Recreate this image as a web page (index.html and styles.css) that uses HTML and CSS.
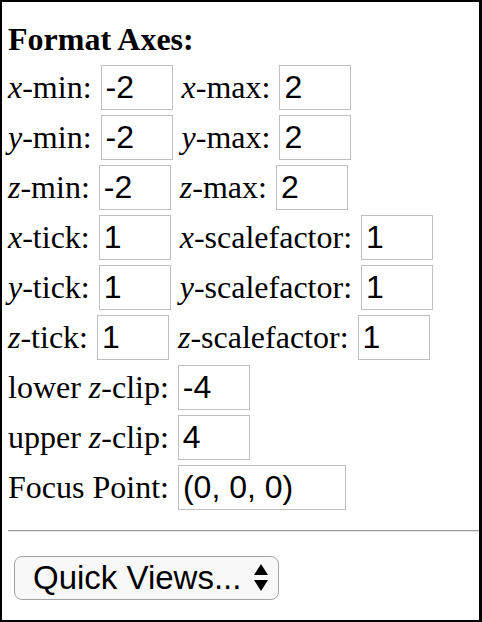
FILE: index.html
```html
<!DOCTYPE html>
<html>
<head>
<meta charset="utf-8">
<link rel="stylesheet" href="styles.css">
</head>
<body>
<div class="frame">
  <div class="title">Format Axes:</div>
  <div class="row"><label class="lbl"><i>x</i>-min:</label><input class="box" value="-2"><label class="lbl"><i>x</i>-max:</label><input class="box" value="2"></div>
  <div class="row"><label class="lbl"><i>y</i>-min:</label><input class="box" value="-2"><label class="lbl"><i>y</i>-max:</label><input class="box" value="2"></div>
  <div class="row"><label class="lbl"><i>z</i>-min:</label><input class="box" value="-2"><label class="lbl"><i>z</i>-max:</label><input class="box" value="2"></div>
  <div class="row"><label class="lbl"><i>x</i>-tick:</label><input class="box" value="1"><label class="lbl"><i>x</i>-scalefactor:</label><input class="box" value="1"></div>
  <div class="row"><label class="lbl"><i>y</i>-tick:</label><input class="box" value="1"><label class="lbl"><i>y</i>-scalefactor:</label><input class="box" value="1"></div>
  <div class="row"><label class="lbl"><i>z</i>-tick:</label><input class="box" value="1"><label class="lbl"><i>z</i>-scalefactor:</label><input class="box" value="1"></div>
  <div class="row"><label class="lbl">lower <i>z</i>-clip:</label><input class="box" value="-4"></div>
  <div class="row"><label class="lbl">upper <i>z</i>-clip:</label><input class="box" value="4"></div>
  <div class="row"><label class="lbl">Focus Point:</label><input class="box wide" value="(0, 0, 0)"></div>
  <hr class="rule">
  <div class="select">
    <span class="select-text">Quick Views...</span>
    <svg class="arrows" width="14" height="28" viewBox="0 0 14 28"><polygon points="7,0 14,11 0,11" fill="#000"/><polygon points="0,16 14,16 7,27" fill="#000"/></svg>
  </div>
</div>
</body>
</html>
```
FILE: styles.css
```css
html, body {
  margin: 0;
  padding: 0;
  background: #fff;
}
.frame {
  box-sizing: border-box;
  width: 482px;
  height: 622px;
  border: 2px solid #000;
  border-right-width: 3px;
  padding: 21px 0 0 6px;
  overflow: hidden;
  font-family: "Liberation Serif", "Times New Roman", serif;
  font-size: 32px;
  color: #000;
}
.title {
  font-weight: bold;
  line-height: 32px;
  margin-bottom: 10px;
}
.row {
  display: flex;
  align-items: baseline;
  margin-bottom: 5px;
}
.lbl {
  line-height: 32px;
  margin-right: 9px;
  white-space: nowrap;
}
.box {
  box-sizing: border-box;
  width: 72px;
  height: 45px;
  margin: 0 9px 0 0;
  padding: 0 2px 0 4px;
  border: 1px solid #bfbfbf;
  font-family: "Liberation Sans", Arial, sans-serif;
  font-size: 32px;
  color: #000;
  background: #fff;
  outline: none;
}
.box.wide {
  width: 168px;
}
.rule {
  margin: 20px 0 0 0;
  height: 0;
  border: 0;
  border-top: 1px solid #9a9a9a;
  border-bottom: 1px solid #e8e8e8;
}
.select {
  box-sizing: border-box;
  display: flex;
  align-items: center;
  justify-content: space-between;
  width: 265px;
  height: 44px;
  margin: 24px 0 0 6px;
  padding: 0 10px 0 18px;
  border: 1px solid #a3a3a3;
  border-radius: 8px;
  background: #f8f8f8;
  font-family: "Liberation Sans", Arial, sans-serif;
  font-size: 33px;
}
.select-text {
  line-height: 36px;
}
.arrows {
  display: block;
}
```
